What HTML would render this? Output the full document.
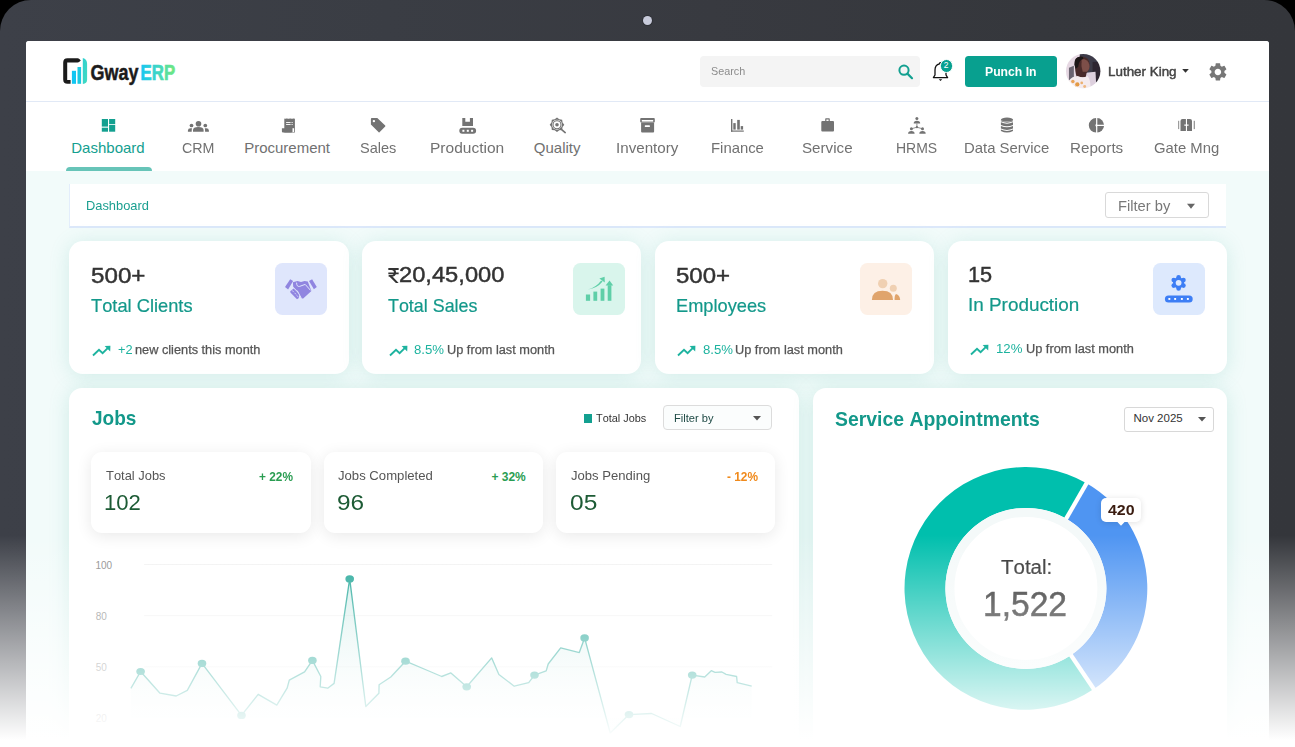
<!DOCTYPE html>
<html><head><meta charset="utf-8"><style>
*{margin:0;padding:0;box-sizing:border-box}
html,body{width:1295px;height:747px;overflow:hidden;background:#000}
body{font-family:"Liberation Sans",sans-serif;position:relative}
.abs{position:absolute}
.t{position:absolute;white-space:nowrap;line-height:1;font-kerning:none}
svg{position:absolute;overflow:visible}
</style></head><body>
<div class="abs" style="left:0.00px;top:0.00px;width:1295.00px;height:800.00px;background:linear-gradient(to right,#3d4048 0%,#3a3d44 30%,#383a40 55%,#35373c 80%,#34363b 100%);border-radius:31px 31px 0 0"></div>
<div class="abs" style="left:642.80px;top:15.80px;width:9.20px;height:9.20px;background:#c8cbdb;border-radius:50%;box-shadow:0 0 0 1px #2f3137"></div>
<div class="abs" style="left:26.00px;top:41.00px;width:1243.00px;height:759.00px;background:#f2fbfa;border-radius:3px 3px 0 0"></div>
<div class="abs" style="left:26.00px;top:41.00px;width:1243.00px;height:61.00px;background:#fff;border-bottom:1px solid #e1e9f6;border-radius:3px 3px 0 0"></div>
<svg style="left:62px;top:56px" width="120" height="32" viewBox="0 0 120 32">
<defs><linearGradient id="lg1" x1="0" y1="0" x2="1" y2="0"><stop offset="0" stop-color="#17c6f2"/><stop offset="0.5" stop-color="#3fd6c4"/><stop offset="1" stop-color="#71e87c"/></linearGradient>
<linearGradient id="lg2" x1="0" y1="0" x2="1" y2="1"><stop offset="0" stop-color="#2fcfd0"/><stop offset="1" stop-color="#42dcc0"/></linearGradient></defs>
<path d="M5.5 2.3 L15.6 2.3 Q16.6 2.3 17.4 3.1 L18.8 4.45 L17.4 5.8 Q16.6 6.6 15.6 6.6 L5.2 6.6 L5.2 23.9 L8.6 23.9 L8.6 27.8 L5.5 27.8 Q1.2 27.8 1.2 23.5 L1.2 6.6 Q1.2 2.3 5.5 2.3 Z" fill="#1b1b1b"/>
<rect x="9.9" y="14.8" width="4.1" height="13" fill="#10c6f2"/>
<rect x="15.5" y="11" width="3.6" height="16.8" fill="#1bc9e2"/>
<path d="M20.8 2 Q25.1 3 25.1 8 L25.1 23.8 Q25.1 27.5 20.8 28 Z" fill="url(#lg2)"/>
<text x="28.5" y="23.6" font-family="Liberation Sans" font-weight="700" font-size="22" textLength="48" lengthAdjust="spacingAndGlyphs" fill="#1b1b1b" stroke="#1b1b1b" stroke-width="0.5">Gway</text>
<text x="78.6" y="23.6" font-family="Liberation Sans" font-weight="700" font-size="22" textLength="34.6" lengthAdjust="spacingAndGlyphs" fill="url(#lg1)" stroke="url(#lg1)" stroke-width="0.7">ERP</text>
</svg>
<div class="abs" style="left:700.00px;top:56.00px;width:220.00px;height:30.50px;background:#f4f4f4;border-radius:4px"></div>
<div class="t" style="left:710.51px;top:66.29px;font-size:11.00px;color:#8c8c8c;transform:scaleX(0.9810);transform-origin:0 0;">Search</div>
<svg style="left:897px;top:63px" width="18" height="18" viewBox="0 0 18 18"><circle cx="7" cy="7.2" r="4.6" fill="none" stroke="#13a090" stroke-width="2"/><path d="M10.4 10.6 L15 15.2" stroke="#13a090" stroke-width="2.2" stroke-linecap="round"/></svg>
<svg style="left:930px;top:60px" width="24" height="24" viewBox="0 0 24 24"><path d="M9.5 3.8 Q9.5 2.6 10.5 2.6 Q11.5 2.6 11.5 3.8 Q16 4.8 16 10 L16 15 L17.6 17.6 L3.4 17.6 L5 15 L5 10 Q5 4.8 9.5 3.8 Z" fill="none" stroke="#111" stroke-width="1.3" stroke-linejoin="round"/><path d="M8.8 19.2 L12.2 19.2 L10.5 21 Z" fill="#111"/></svg>
<div class="abs" style="left:939.60px;top:58.80px;width:13.80px;height:13.80px;background:#07a090;border-radius:50%;border:0.8px solid #fff"></div>
<div class="t" style="left:943.77px;top:61.30px;font-size:8.50px;color:#fff;">2</div>
<div class="abs" style="left:964.50px;top:55.70px;width:92.30px;height:31.20px;background:#08a08f;border-radius:3.5px"></div>
<div class="t" style="left:984.98px;top:64.59px;font-size:13.00px;color:#fff;font-weight:700;transform:scaleX(0.9396);transform-origin:0 0;">Punch In</div>
<svg style="left:1065.7px;top:54.1px" width="34.4" height="34.4" viewBox="0 0 35 35">
<defs><clipPath id="av"><circle cx="17.5" cy="17.5" r="17.5"/></clipPath><filter id="avb" x="-10%" y="-10%" width="120%" height="120%"><feGaussianBlur stdDeviation="0.6"/></filter></defs>
<g clip-path="url(#av)"><g filter="url(#avb)">
<rect width="35" height="35" fill="#e6d8e3"/>
<rect x="14" y="-1" width="22" height="22" fill="#3c3b4a"/>
<rect x="27" y="8" width="9" height="27" fill="#2e2832"/>
<path d="M3 14 L8 12 L8 26 L3 27 Z" fill="#6a6470"/>
<path d="M20 19 L30 18 L31 35 L20 35 Z" fill="#ddd0de"/>
<path d="M9 9 Q9 2.5 16 2.5 Q23.5 3 24 10 Q24.5 16 21 19 L20 24 L11 24 Q9 18 9 9 Z" fill="#4a2c2a"/>
<path d="M16 5 Q22.5 5 23.8 11 Q24.5 15.5 21.5 18 L17 18 Q15 12 16 5 Z" fill="#7d5048"/>
<path d="M8.5 11 Q8 3 15 2.5 Q18 2.5 17.5 5 Q13 6 12.5 13 L10 15 Z" fill="#1c1519"/>
<path d="M2 35 L3 27 Q6 23 12 22.5 Q17 25 22 22.5 Q25 26 25 35 Z" fill="#f4ebee"/>
<circle cx="7" cy="28" r="1.8" fill="#e9a45a"/><circle cx="11.5" cy="31" r="2.2" fill="#e39a45"/><circle cx="16" cy="29.5" r="1.4" fill="#ecb070"/><circle cx="9" cy="34" r="1.6" fill="#e8a050"/><circle cx="19" cy="33" r="1.5" fill="#efb880"/>
</g></g></svg>
<div class="t" style="left:1108.30px;top:64.59px;font-size:13.00px;color:#444;transform:scaleX(1.0312);transform-origin:0 0;-webkit-text-stroke:0.45px #444;">Luther King</div>
<svg style="left:1181px;top:68px" width="9" height="6" viewBox="0 0 9 6"><path d="M1.2 1 L7.8 1 L4.5 4.8 Z" fill="#333"/></svg>
<svg style="left:1206.5px;top:60.7px" width="21.8" height="21.8" viewBox="0 0 24 24"><path fill="#777" d="M19.14 12.94c.04-.3.06-.61.06-.94 0-.32-.02-.64-.07-.94l2.03-1.58a.49.49 0 0 0 .12-.61l-1.92-3.32a.488.488 0 0 0-.59-.22l-2.39.96c-.5-.38-1.03-.7-1.62-.94l-.36-2.54a.484.484 0 0 0-.48-.41h-3.84c-.24 0-.43.17-.47.41l-.36 2.54c-.59.24-1.13.57-1.62.94l-2.39-.96c-.22-.08-.47 0-.59.22L2.74 8.87c-.12.21-.08.47.12.61l2.03 1.58c-.05.3-.09.63-.09.94s.02.64.07.94l-2.03 1.58a.49.49 0 0 0-.12.61l1.92 3.32c.12.22.37.29.59.22l2.39-.96c.5.38 1.03.7 1.62.94l.36 2.54c.05.24.24.41.48.41h3.84c.24 0 .44-.17.47-.41l.36-2.54c.59-.24 1.13-.56 1.62-.94l2.39.96c.22.08.47 0 .59-.22l1.92-3.32c.12-.22.07-.47-.12-.61l-2.01-1.58zM12 15.6c-1.98 0-3.6-1.62-3.6-3.6s1.62-3.6 3.6-3.6 3.6 1.62 3.6 3.6-1.62 3.6-3.6 3.6z"/></svg>
<div class="abs" style="left:26.00px;top:102.00px;width:1243.00px;height:69.00px;background:#fff"></div>
<div class="t" style="left:71.27px;top:139.90px;font-size:15.00px;color:#13a090;">Dashboard</div>
<div class="t" style="left:182.08px;top:139.90px;font-size:15.00px;color:#717171;transform:scaleX(0.9513);transform-origin:0 0;">CRM</div>
<div class="t" style="left:244.17px;top:139.90px;font-size:15.00px;color:#717171;">Procurement</div>
<div class="t" style="left:359.64px;top:139.90px;font-size:15.00px;color:#717171;transform:scaleX(0.9697);transform-origin:0 0;">Sales</div>
<div class="t" style="left:430.33px;top:139.90px;font-size:15.00px;color:#717171;transform:scaleX(1.0344);transform-origin:0 0;">Production</div>
<div class="t" style="left:533.79px;top:139.90px;font-size:15.00px;color:#717171;">Quality</div>
<div class="t" style="left:615.50px;top:139.90px;font-size:15.00px;color:#717171;transform:scaleX(1.0102);transform-origin:0 0;">Inventory</div>
<div class="t" style="left:710.58px;top:139.90px;font-size:15.00px;color:#717171;transform:scaleX(0.9909);transform-origin:0 0;">Finance</div>
<div class="t" style="left:801.91px;top:139.90px;font-size:15.00px;color:#717171;transform:scaleX(1.0109);transform-origin:0 0;">Service</div>
<div class="t" style="left:896.05px;top:139.90px;font-size:15.00px;color:#717171;transform:scaleX(0.9326);transform-origin:0 0;">HRMS</div>
<div class="t" style="left:963.58px;top:139.90px;font-size:15.00px;color:#717171;transform:scaleX(0.9932);transform-origin:0 0;">Data Service</div>
<div class="t" style="left:1069.75px;top:139.90px;font-size:15.00px;color:#717171;transform:scaleX(1.0128);transform-origin:0 0;">Reports</div>
<div class="t" style="left:1153.65px;top:139.90px;font-size:15.00px;color:#717171;transform:scaleX(0.9899);transform-origin:0 0;">Gate Mng</div>
<svg style="left:0;top:0" width="1295" height="200" viewBox="0 0 1295 200"><g fill="#13a090"><rect x="101.8" y="119" width="6.2" height="7.6"/><rect x="109.1" y="119" width="6.1" height="5"/><rect x="101.8" y="127.7" width="6.2" height="4"/><rect x="109.1" y="124.8" width="6.1" height="6.9"/></g><g fill="#737373"><circle cx="198.5" cy="123.8" r="2.8"/><circle cx="191.5" cy="125.5" r="1.85"/><circle cx="205.3" cy="125.5" r="1.85"/><path d="M193 131.7 L193 130 Q193 127 198.3 127 Q203.6 127 203.6 130 L203.6 131.7 Z"/><path d="M187.9 131.7 L187.9 130.5 Q188 128.2 190.5 128.2 L192 128.2 Q191.7 129.5 191.7 131.7 Z"/><path d="M208.9 131.7 L208.9 130.5 Q208.8 128.2 206.3 128.2 L204.8 128.2 Q205.1 129.5 205.1 131.7 Z"/></g><g fill="#737373"><path d="M284.3 119 L285 118.3 L285.7 119 L286.4 118.3 L287.1 119 L287.8 118.3 L288.5 119 L289.2 118.3 L289.9 119 L290.6 118.3 L291.3 119 L292 118.3 L292.7 119 L293.4 118.3 L294.1 119 L294.9 118.3 L294.9 132.6 L284.3 132.6 Z"/><path d="M281.9 128.2 L291.7 128.2 L291.7 132.6 L283 132.6 Q281.9 132.6 281.9 131.5 Z"/></g><g fill="#fff"><rect x="286.1" y="122" width="4.5" height="0.9"/><rect x="291.5" y="122" width="1.2" height="0.9"/><rect x="286.1" y="124.1" width="4.5" height="0.9"/><rect x="291.5" y="124.1" width="1.2" height="0.9"/><rect x="292.5" y="128.2" width="1.6" height="3.8"/></g><path fill="#737373" d="M370.9 119.2 Q370.7 118 371.9 118 L377.3 118 L385.2 125.6 Q385.6 126 385.2 126.4 L379.5 132.2 Q379.1 132.6 378.7 132.2 L370.9 124.6 Z"/><circle cx="373.9" cy="121.1" r="1.2" fill="#fff"/><g fill="#737373"><path d="M462.3 118 L465.3 118 L465.3 121.7 L469.9 121.7 L469.9 118 L473 118 L473 125.9 L462.3 125.9 Z"/><rect x="459.3" y="127.8" width="16.8" height="6" rx="3"/></g><g fill="#fff"><rect x="462.4" y="129.8" width="2" height="2"/><rect x="466.8" y="129.8" width="2" height="2"/><rect x="471.1" y="129.8" width="2" height="2"/></g><path fill="#737373" d="M557.00 117.50 L559.30 119.26 L562.16 119.64 L562.54 122.50 L564.30 124.80 L562.54 127.10 L562.16 129.96 L559.30 130.34 L557.00 132.10 L554.70 130.34 L551.84 129.96 L551.46 127.10 L549.70 124.80 L551.46 122.50 L551.84 119.64 L554.70 119.26 Z"/><circle cx="557" cy="124.8" r="5" fill="#fff"/><circle cx="557" cy="124.8" r="4" fill="none" stroke="#737373" stroke-width="1.1"/><circle cx="557" cy="124.8" r="1.8" fill="#737373"/><path d="M560.5 128.6 L565.2 132.6" stroke="#737373" stroke-width="1.6" stroke-linecap="round"/><g fill="#737373"><rect x="640.2" y="118" width="14.6" height="4.6" rx="1"/><path d="M641.1 122.6 L654.1 122.6 L654.1 131.4 Q654.1 132.4 653.1 132.4 L642.1 132.4 Q641.1 132.4 641.1 131.4 Z"/></g><rect x="641.8" y="120" width="11.4" height="1.6" fill="#fff"/><rect x="644.8" y="125.3" width="5.1" height="1.7" rx="0.5" fill="#fff"/><g fill="#737373"><rect x="731" y="119" width="1.4" height="12.7"/><rect x="731" y="130.5" width="12.8" height="1.2"/><rect x="733.3" y="123.1" width="2.4" height="6.5"/><rect x="737.2" y="119.9" width="2.6" height="9.7"/><rect x="740.7" y="126.1" width="2.4" height="3.5"/></g><g fill="#737373"><path d="M825.2 121.3 L825.2 119 Q825.2 118.3 825.9 118.3 L829.1 118.3 Q829.8 118.3 829.8 119 L829.8 121.3 L828.6 121.3 L828.6 119.5 L826.4 119.5 L826.4 121.3 Z"/><rect x="821.3" y="121.1" width="12.7" height="10.4" rx="1"/></g><g fill="#737373"><circle cx="916.9" cy="118.6" r="1.5"/><path d="M913.7 123.6 Q913.7 120.8 916.9 120.8 Q920.2 120.8 920.2 123.6 Z"/><circle cx="916.9" cy="127.2" r="1.1"/><circle cx="911.4" cy="128.8" r="1.5"/><circle cx="922.5" cy="128.8" r="1.5"/><path d="M908.1 133.8 Q908.1 131 911.4 131 Q914.6 131 914.6 133.8 Z"/><path d="M919.3 133.8 Q919.3 131 922.5 131 Q925.7 131 925.7 133.8 Z"/></g><path d="M916.9 123.6 L916.9 127.2 L911.4 128.8 M916.9 127.2 L922.5 128.8" stroke="#737373" stroke-width="0.8" fill="none"/><g fill="#737373"><ellipse cx="1007" cy="119.6" rx="6.1" ry="2"/><path d="M1000.9 120.2 Q1007 123.2 1013 120.2 L1013 121.3 Q1007 124 1000.9 121.3 Z"/><path d="M1000.9 122.3 Q1007 125.2 1013 122.3 L1013 124.9 Q1007 127.7 1000.9 124.9 Z"/><path d="M1000.9 125.9 Q1007 128.8 1013 125.9 L1013 128.6 Q1007 131.4 1000.9 128.6 Z"/><path d="M1000.9 129.6 Q1007 132.5 1013 129.6 L1013 130.9 Q1007 134 1000.9 130.9 Z"/></g><path fill="#737373" d="M1096.1 118 L1096.1 123.8 Q1094.6 125.3 1096.1 126.9 L1096.1 132.6 A7.2 7.2 0 0 1 1096.1 118 Z"/><path fill="#737373" d="M1097.3 118 A7.2 7.2 0 0 1 1104 124.8 L1097.3 124.8 Z"/><path fill="#737373" d="M1097.3 126 L1104 126 A7.2 7.2 0 0 1 1097.3 132.6 Z"/><g fill="#737373"><rect x="1178" y="120.8" width="1.2" height="8.3" opacity="0.7"/><rect x="1193.7" y="120.8" width="1.2" height="8.3" opacity="0.8"/><path d="M1180.5 131 L1180.5 121 Q1180.5 119 1182.5 119 L1185.9 119 L1185.9 124.4 L1184.3 124.4 L1184.3 125.7 L1185.9 125.7 L1185.9 131 Z"/><path d="M1187 131 L1187 125.7 L1188.6 125.7 L1188.6 124.4 L1187 124.4 L1187 119 L1190 119 Q1192 119 1192 121 L1192 131 Z"/></g></svg>
<div class="abs" style="left:65.60px;top:167.00px;width:86.20px;height:4.00px;background:#67c4b8;border-radius:4px 4px 0 0"></div>
<div class="abs" style="left:68.50px;top:183.50px;width:1157.70px;height:44.00px;background:#fff;border-bottom:2px solid #dce8fa;border-left:1px solid #e3edfb"></div>
<div class="t" style="left:85.65px;top:198.89px;font-size:13.00px;color:#1a9f90;transform:scaleX(0.9888);transform-origin:0 0;">Dashboard</div>
<div class="abs" style="left:1105.30px;top:192.40px;width:103.40px;height:25.40px;background:#fff;border:1px solid #d9d9d9;border-radius:3px"></div>
<div class="t" style="left:1117.79px;top:198.75px;font-size:14.00px;color:#787878;transform:scaleX(1.0512);transform-origin:0 0;">Filter by</div>
<svg style="left:1185.7px;top:202.8px" width="10" height="7" viewBox="0 0 10 7"><path d="M1 0.8 L9 0.8 L5 5.8 Z" fill="#666"/></svg>
<div class="abs" style="left:69.00px;top:240.80px;width:279.60px;height:133.40px;background:#fff;border-radius:14px;box-shadow:0 2px 20px rgba(80,180,165,0.2)"></div>
<div class="abs" style="left:361.80px;top:240.80px;width:279.60px;height:133.40px;background:#fff;border-radius:14px;box-shadow:0 2px 20px rgba(80,180,165,0.2)"></div>
<div class="abs" style="left:654.80px;top:240.80px;width:279.60px;height:133.40px;background:#fff;border-radius:14px;box-shadow:0 2px 20px rgba(80,180,165,0.2)"></div>
<div class="abs" style="left:947.80px;top:240.80px;width:279.60px;height:133.40px;background:#fff;border-radius:14px;box-shadow:0 2px 20px rgba(80,180,165,0.2)"></div>
<div class="t" style="left:90.53px;top:264.57px;font-size:22.00px;color:#333;transform:scaleX(1.0990);transform-origin:0 0;-webkit-text-stroke:0.45px #333;">500+</div>
<div class="t" style="left:91.09px;top:296.54px;font-size:18.50px;color:#13988a;transform:scaleX(0.9879);transform-origin:0 0;-webkit-text-stroke:0.2px #13988a;">Total Clients</div>
<div class="abs" style="left:275.10px;top:263.00px;width:52.00px;height:52.00px;background:#dfe6fc;border-radius:7.5px"></div>
<svg style="left:91.5px;top:344.5px" width="20" height="12" viewBox="0 0 20 12"><path d="M1 10.5 L7 4.8 L10.6 8.2 L16.5 2.3" fill="none" stroke="#1db39f" stroke-width="1.9" stroke-linejoin="miter"/><path d="M12.6 1 L18.4 0.8 L18.2 6.6 Z" fill="#1db39f"/></svg>
<div class="t" style="left:399.31px;top:264.37px;font-size:22.00px;color:#333;transform:scaleX(1.0771);transform-origin:0 0;-webkit-text-stroke:0.45px #333;">20,45,000</div>
<svg style="left:388.2px;top:268.1px" width="11" height="15" viewBox="0 0 10.2 14.8"><path fill="#333" d="M0 0 H10.2 V1.9 H0 Z M0 4.4 H10.2 V6.2 H0 Z M2.8 0 Q7.6 0.2 7.7 4.6 Q7.5 8.6 2.8 8.7 H0.3 V6.9 H2.8 Q5.5 6.9 5.6 4.6 Q5.5 1.9 2.8 1.9 Z M0.8 8.1 L3.4 7.6 L10.2 14.8 L7.5 14.8 Z"/></svg>
<div class="t" style="left:387.60px;top:296.54px;font-size:18.50px;color:#13988a;transform:scaleX(0.9665);transform-origin:0 0;-webkit-text-stroke:0.2px #13988a;">Total Sales</div>
<div class="abs" style="left:572.50px;top:263.00px;width:52.00px;height:52.00px;background:#d9f5ec;border-radius:7.5px"></div>
<svg style="left:389.3px;top:344.5px" width="20" height="12" viewBox="0 0 20 12"><path d="M1 10.5 L7 4.8 L10.6 8.2 L16.5 2.3" fill="none" stroke="#1db39f" stroke-width="1.9" stroke-linejoin="miter"/><path d="M12.6 1 L18.4 0.8 L18.2 6.6 Z" fill="#1db39f"/></svg>
<div class="t" style="left:676.24px;top:265.27px;font-size:22.00px;color:#333;transform:scaleX(1.0906);transform-origin:0 0;-webkit-text-stroke:0.45px #333;">500+</div>
<div class="t" style="left:675.71px;top:297.34px;font-size:18.50px;color:#13988a;transform:scaleX(0.9851);transform-origin:0 0;-webkit-text-stroke:0.2px #13988a;">Employees</div>
<div class="abs" style="left:860.20px;top:263.00px;width:52.00px;height:52.00px;background:#fdf0e6;border-radius:7.5px"></div>
<svg style="left:677.3px;top:344.5px" width="20" height="12" viewBox="0 0 20 12"><path d="M1 10.5 L7 4.8 L10.6 8.2 L16.5 2.3" fill="none" stroke="#1db39f" stroke-width="1.9" stroke-linejoin="miter"/><path d="M12.6 1 L18.4 0.8 L18.2 6.6 Z" fill="#1db39f"/></svg>
<div class="t" style="left:967.84px;top:263.87px;font-size:22.00px;color:#333;transform:scaleX(0.9876);transform-origin:0 0;-webkit-text-stroke:0.45px #333;">15</div>
<div class="t" style="left:967.76px;top:295.54px;font-size:18.50px;color:#13988a;transform:scaleX(1.0207);transform-origin:0 0;-webkit-text-stroke:0.2px #13988a;">In Production</div>
<div class="abs" style="left:1153.20px;top:263.00px;width:52.00px;height:52.00px;background:#dde9fd;border-radius:7.5px"></div>
<svg style="left:970.3px;top:343.5px" width="20" height="12" viewBox="0 0 20 12"><path d="M1 10.5 L7 4.8 L10.6 8.2 L16.5 2.3" fill="none" stroke="#1db39f" stroke-width="1.9" stroke-linejoin="miter"/><path d="M12.6 1 L18.4 0.8 L18.2 6.6 Z" fill="#1db39f"/></svg>
<div class="t" style="left:118.08px;top:343.52px;font-size:12.50px;color:#1db39f;transform:scaleX(1.0221);transform-origin:0 0;">+2</div>
<div class="t" style="left:135.45px;top:343.52px;font-size:12.50px;color:#555;transform:scaleX(1.0195);transform-origin:0 0;-webkit-text-stroke:0.25px #555;">new clients this month</div>
<div class="t" style="left:414.33px;top:343.52px;font-size:12.50px;color:#1db39f;transform:scaleX(1.0545);transform-origin:0 0;">8.5%</div>
<div class="t" style="left:446.62px;top:343.52px;font-size:12.50px;color:#555;transform:scaleX(1.0211);transform-origin:0 0;-webkit-text-stroke:0.25px #555;">Up from last month</div>
<div class="t" style="left:703.03px;top:343.52px;font-size:12.50px;color:#1db39f;transform:scaleX(1.0545);transform-origin:0 0;">8.5%</div>
<div class="t" style="left:735.32px;top:343.52px;font-size:12.50px;color:#555;transform:scaleX(1.0211);transform-origin:0 0;-webkit-text-stroke:0.25px #555;">Up from last month</div>
<div class="t" style="left:996.00px;top:342.82px;font-size:12.50px;color:#1db39f;transform:scaleX(1.0542);transform-origin:0 0;">12%</div>
<div class="t" style="left:1025.62px;top:342.82px;font-size:12.50px;color:#555;transform:scaleX(1.0211);transform-origin:0 0;-webkit-text-stroke:0.25px #555;">Up from last month</div>
<svg style="left:275.1px;top:263px" width="52" height="52" viewBox="0 0 52 52"><path d="M10 24.1 L15.2 16.2 L18.1 17.9 L13.1 26.4 Z" fill="#9085e0"/><path d="M34 17.9 L37.1 16.2 L41.8 24.1 L38.9 26.3 Z" fill="#9085e0"/><path d="M17.9 19.2 L22.4 17.9 L26 19 L29.5 18 L32.8 18.6 L36.4 28.1 L28.2 35.6 L26.3 35.4 L22.3 28 L18.2 23.8 Z" fill="#9085e0"/><path d="M15.2 28.3 L18.6 25.6 L24.6 31.6 L23.6 35.2 L22 36.2 L15.6 29.8 Z" fill="#9085e0"/><path d="M21.6 19.6 Q21.6 24 24.6 23.4 L30.2 21.4 L35.6 27.4" fill="none" stroke="#dfe6fc" stroke-width="1"/><path d="M22.2 27.6 L26.6 35.8" fill="none" stroke="#dfe6fc" stroke-width="1"/><path d="M17.2 27.4 L18.6 29 M19.6 29.8 L21 31.4 M21.8 32.4 L23 33.8" fill="none" stroke="#dfe6fc" stroke-width="0.8"/></svg>
<svg style="left:572.5px;top:263px" width="52" height="52" viewBox="0 0 52 52"><rect x="12.9" y="31.5" width="4.2" height="6.3" fill="#5fcfa8"/><rect x="20.4" y="28.6" width="3.8" height="9.2" fill="#5fcfa8"/><rect x="27.6" y="25.6" width="3.8" height="12.2" fill="#5fcfa8"/><rect x="34.7" y="22.2" width="3.7" height="15.6" fill="#5fcfa8"/><path d="M32.6 22.6 L36.55 17.6 L40.2 22.6 Z" fill="#5fcfa8"/><path d="M14.8 26.6 Q23 24.5 28.2 17.5 L29.6 18.6 Q24 25.5 14.8 26.6 Z" fill="#5fcfa8"/><path d="M26.4 15.6 L31.6 13.8 L31.8 19.4 Z" fill="#5fcfa8"/></svg>
<svg style="left:860.2px;top:263px" width="52" height="52" viewBox="0 0 52 52"><circle cx="22.7" cy="20.6" r="4.7" fill="#f0d0b2"/><circle cx="33.3" cy="25.3" r="3.5" fill="#f0d0b2"/><path d="M11.9 36.9 Q12 27.8 22.5 27.8 Q33 27.8 33 36.9 Z" fill="#e0a46c"/><path d="M34.6 36.9 Q34.3 32.5 36 31 Q39.8 32 40.2 36.9 Z" fill="#e0a46c"/></svg>
<svg style="left:1153.2px;top:263px" width="52" height="52" viewBox="0 0 52 52"><circle cx="25.60" cy="14.20" r="2.3" fill="#3d7ef5"/><circle cx="30.45" cy="17.00" r="2.3" fill="#3d7ef5"/><circle cx="30.45" cy="22.60" r="2.3" fill="#3d7ef5"/><circle cx="25.60" cy="25.40" r="2.3" fill="#3d7ef5"/><circle cx="20.75" cy="22.60" r="2.3" fill="#3d7ef5"/><circle cx="20.75" cy="17.00" r="2.3" fill="#3d7ef5"/><circle cx="25.6" cy="19.8" r="5.6" fill="#3d7ef5"/><circle cx="25.6" cy="19.8" r="2.9" fill="#dfeafd"/><rect x="11.9" y="32.4" width="27.8" height="7" rx="3.5" fill="#3d7ef5"/><rect x="15.4" y="35" width="1.9" height="1.9" fill="#fff"/><rect x="21.2" y="35" width="1.9" height="1.9" fill="#fff"/><rect x="27.9" y="35" width="1.9" height="1.9" fill="#fff"/><rect x="33.9" y="35" width="1.9" height="1.9" fill="#fff"/></svg>
<div class="abs" style="left:69.30px;top:388.20px;width:729.70px;height:411.80px;background:#fff;border-radius:13px;box-shadow:0 2px 20px rgba(80,180,165,0.22)"></div>
<div class="t" style="left:91.71px;top:406.62px;font-size:21.00px;color:#13988a;font-weight:700;transform:scaleX(0.9052);transform-origin:0 0;">Jobs</div>
<div class="abs" style="left:583.60px;top:413.50px;width:8.80px;height:9.00px;background:#13a090"></div>
<div class="t" style="left:596.16px;top:412.51px;font-size:11.80px;color:#333;transform:scaleX(0.9229);transform-origin:0 0;">Total Jobs</div>
<div class="abs" style="left:663.30px;top:405.40px;width:109.10px;height:25.00px;background:#fbfdfd;border:1px solid #dcdcdc;border-radius:4px"></div>
<div class="t" style="left:673.69px;top:411.58px;font-size:11.60px;color:#1e4a45;transform:scaleX(0.9584);transform-origin:0 0;">Filter by</div>
<svg style="left:752px;top:415px" width="10" height="7" viewBox="0 0 10 7"><path d="M1 1 L9 1 L5 5.5 Z" fill="#555"/></svg>
<div class="abs" style="left:91.30px;top:452.20px;width:219.30px;height:80.60px;background:#fff;border-radius:11px;box-shadow:0 3px 16px rgba(0,0,0,0.09)"></div>
<div class="t" style="left:105.61px;top:468.57px;font-size:13.50px;color:#555;transform:scaleX(0.9563);transform-origin:0 0;">Total Jobs</div>
<div class="t" style="left:104.22px;top:492.17px;font-size:22.00px;color:#1d5b35;transform:scaleX(1.0052);transform-origin:0 0;">102</div>
<div class="t" style="left:259.40px;top:470.64px;font-size:12.00px;color:#2a9d52;font-weight:700;transform:scaleX(0.9869);transform-origin:0 0;">+ 22%</div>
<div class="abs" style="left:323.80px;top:452.20px;width:219.30px;height:80.60px;background:#fff;border-radius:11px;box-shadow:0 3px 16px rgba(0,0,0,0.09)"></div>
<div class="t" style="left:338.19px;top:468.57px;font-size:13.50px;color:#555;transform:scaleX(0.9723);transform-origin:0 0;">Jobs Completed</div>
<div class="t" style="left:337.26px;top:492.17px;font-size:22.00px;color:#1d5b35;transform:scaleX(1.1080);transform-origin:0 0;">96</div>
<div class="t" style="left:491.40px;top:470.64px;font-size:12.00px;color:#2a9d52;font-weight:700;">+ 32%</div>
<div class="abs" style="left:556.20px;top:452.20px;width:219.30px;height:80.60px;background:#fff;border-radius:11px;box-shadow:0 3px 16px rgba(0,0,0,0.09)"></div>
<div class="t" style="left:570.60px;top:468.57px;font-size:13.50px;color:#555;transform:scaleX(0.9687);transform-origin:0 0;">Jobs Pending</div>
<div class="t" style="left:569.84px;top:492.17px;font-size:22.00px;color:#1d5b35;transform:scaleX(1.1152);transform-origin:0 0;">05</div>
<div class="t" style="left:727.24px;top:470.64px;font-size:12.00px;color:#f08a1c;font-weight:700;transform:scaleX(0.9881);transform-origin:0 0;">- 12%</div>
<div class="abs" style="left:812.70px;top:388.30px;width:414.70px;height:411.70px;background:#fff;border-radius:13px;box-shadow:0 2px 20px rgba(80,180,165,0.22)"></div>
<div class="t" style="left:835.04px;top:407.72px;font-size:21.00px;color:#13988a;font-weight:700;transform:scaleX(0.9235);transform-origin:0 0;">Service Appointments</div>
<div class="abs" style="left:1124.00px;top:407.00px;width:89.50px;height:24.50px;background:#fff;border:1px solid #d8d8d8;border-radius:3px"></div>
<div class="t" style="left:1133.46px;top:413.46px;font-size:11.50px;color:#333;">Nov 2025</div>
<svg style="left:0;top:0" width="1295" height="747" viewBox="0 0 1295 747"><path d="M1093.79 689.05 A121.40 121.40 0 1 1 1086.60 483.26 L1066.15 518.68 A80.50 80.50 0 1 0 1070.92 655.14 Z" fill="#00bfad"/><path d="M1086.60 483.26 A121.40 121.40 0 0 1 1093.79 689.05 L1070.92 655.14 A80.50 80.50 0 0 0 1066.15 518.68 Z" fill="#4f95f2"/><path d="M1065.15 520.42 L1088.10 480.67" stroke="#fff" stroke-width="4.2"/><path d="M1069.80 653.48 L1095.46 691.53" stroke="#fff" stroke-width="4.2"/><circle cx="1025.9" cy="588.4" r="76" fill="none" stroke="#f4f9f9" stroke-width="9"/></svg>
<div class="abs" style="left:1101.40px;top:498.00px;width:39.20px;height:24.40px;background:#fff;border-radius:5px;box-shadow:0 1px 6px rgba(0,0,0,0.12)"></div>
<svg style="left:1115px;top:521px" width="12" height="6" viewBox="0 0 12 6"><path d="M1.5 0 L10.5 0 L6 4.8 Z" fill="#fff"/></svg>
<div class="t" style="left:1108.06px;top:502.95px;font-size:14.00px;color:#3a1c10;font-weight:700;transform:scaleX(1.1386);transform-origin:0 0;">420</div>
<div class="t" style="left:1000.74px;top:556.97px;font-size:20.00px;color:#2a2a2a;transform:scaleX(1.0242);transform-origin:0 0;-webkit-text-stroke:0.2px #2a2a2a;">Total:</div>
<div class="t" style="left:982.84px;top:587.09px;font-size:34.50px;color:#262626;transform:scaleX(0.9723);transform-origin:0 0;-webkit-text-stroke:0.5px #262626;">1,522</div>
<svg style="left:0;top:0" width="1295" height="747" viewBox="0 0 1295 747"><defs><linearGradient id="ag" gradientUnits="userSpaceOnUse" x1="0" y1="570" x2="0" y2="718"><stop offset="0" stop-color="#13a090" stop-opacity="0.2"/><stop offset="1" stop-color="#13a090" stop-opacity="0.02"/></linearGradient></defs><rect x="144.2" y="564.0" width="628" height="1" fill="#f2f2f2"/><rect x="144.2" y="615.1" width="628" height="1" fill="#f2f2f2"/><rect x="144.2" y="666.3" width="628" height="1" fill="#f2f2f2"/><path d="M130.9 688.4 L140.6 671.5 L160.0 693.2 L176.2 696.0 L187.3 690.4 L202.0 663.4 L241.5 715.4 L258.2 694.3 L276.8 705.1 L287.1 688.2 L289.3 680.1 L304.6 671.8 L312.4 660.4 L320.8 676.5 L320.2 686.8 L327.7 688.2 L334.1 683.4 L349.7 578.9 L365.8 706.5 L378.9 693.2 L379.1 684.8 L390.8 677.0 L405.5 661.2 L430.0 671.5 L441.7 676.5 L450.9 672.9 L466.7 686.8 L491.7 657.9 L498.9 674.5 L514.2 686.2 L528.7 682.6 L534.5 675.1 L546.2 670.9 L548.2 664.0 L560.7 647.9 L579.3 652.6 L584.6 637.9 L610.2 732.9 L629.0 714.6 L651.6 713.5 L680.2 726.5 L692.2 675.1 L704.7 677.0 L711.3 670.7 L715.0 672.3 L721.9 672.0 L726.1 674.3 L736.6 676.5 L737.2 682.6 L751.7 686.2 L751.7 718 L130.9 718 Z" fill="url(#ag)"/><path d="M130.9 688.4 L140.6 671.5 L160.0 693.2 L176.2 696.0 L187.3 690.4 L202.0 663.4 L241.5 715.4 L258.2 694.3 L276.8 705.1 L287.1 688.2 L289.3 680.1 L304.6 671.8 L312.4 660.4 L320.8 676.5 L320.2 686.8 L327.7 688.2 L334.1 683.4 L349.7 578.9 L365.8 706.5 L378.9 693.2 L379.1 684.8 L390.8 677.0 L405.5 661.2 L430.0 671.5 L441.7 676.5 L450.9 672.9 L466.7 686.8 L491.7 657.9 L498.9 674.5 L514.2 686.2 L528.7 682.6 L534.5 675.1 L546.2 670.9 L548.2 664.0 L560.7 647.9 L579.3 652.6 L584.6 637.9 L610.2 732.9 L629.0 714.6 L651.6 713.5 L680.2 726.5 L692.2 675.1 L704.7 677.0 L711.3 670.7 L715.0 672.3 L721.9 672.0 L726.1 674.3 L736.6 676.5 L737.2 682.6 L751.7 686.2" fill="none" stroke="#1ea596" stroke-width="1.35" stroke-linejoin="round"/><ellipse cx="140.6" cy="671.5" rx="4.3" ry="3.6" fill="#1ea596"/><ellipse cx="202.0" cy="663.4" rx="4.3" ry="3.6" fill="#1ea596"/><ellipse cx="241.5" cy="715.4" rx="4.3" ry="3.6" fill="#1ea596"/><ellipse cx="312.4" cy="660.4" rx="4.3" ry="3.6" fill="#1ea596"/><ellipse cx="349.7" cy="578.9" rx="4.3" ry="3.6" fill="#1ea596"/><ellipse cx="405.5" cy="661.2" rx="4.3" ry="3.6" fill="#1ea596"/><ellipse cx="466.7" cy="686.8" rx="4.3" ry="3.6" fill="#1ea596"/><ellipse cx="534.5" cy="675.1" rx="4.3" ry="3.6" fill="#1ea596"/><ellipse cx="584.6" cy="637.9" rx="4.3" ry="3.6" fill="#1ea596"/><ellipse cx="629.0" cy="714.6" rx="4.3" ry="3.6" fill="#1ea596"/><ellipse cx="692.2" cy="675.1" rx="4.3" ry="3.6" fill="#1ea596"/></svg>
<div class="t" style="left:95.44px;top:561.03px;font-size:10.00px;color:#8a8a8a;">100</div>
<div class="t" style="left:95.77px;top:612.43px;font-size:10.00px;color:#8a8a8a;">80</div>
<div class="t" style="left:95.80px;top:663.33px;font-size:10.00px;color:#8a8a8a;">50</div>
<div class="t" style="left:95.70px;top:713.93px;font-size:10.00px;color:#8a8a8a;">20</div>
<svg style="left:1197px;top:416px" width="10" height="7" viewBox="0 0 10 7"><path d="M1 1 L9 1 L5 5.5 Z" fill="#555"/></svg>
<div class="abs" style="left:0.00px;top:535.00px;width:1295.00px;height:205.00px;background:linear-gradient(to bottom,rgba(255,255,255,0),rgba(255,255,255,1))"></div>
<div class="abs" style="left:0.00px;top:740.00px;width:1295.00px;height:7.00px;background:#fff"></div>
</body></html>
